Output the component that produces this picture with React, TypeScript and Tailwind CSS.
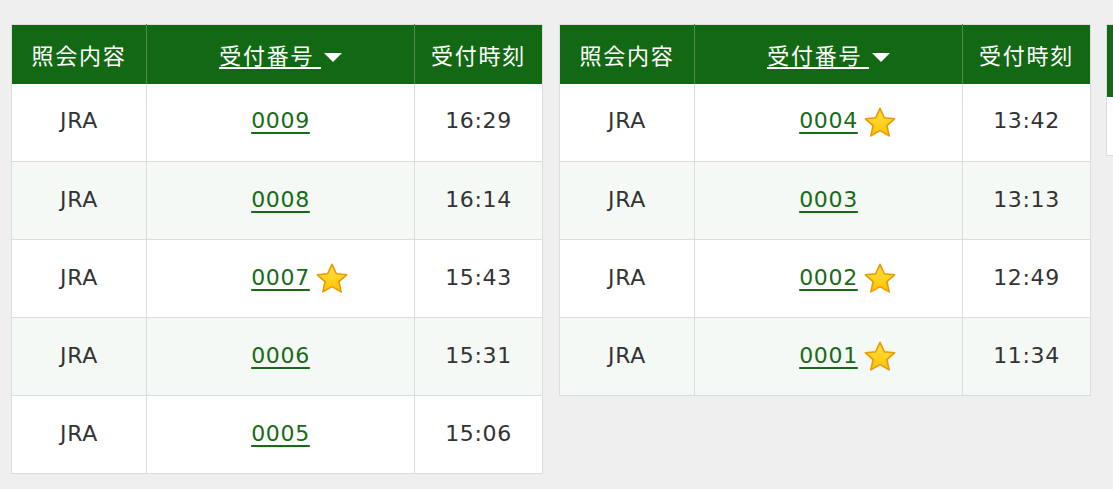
import React from "react";

type Row = { kind: string; no: string; time: string; star?: boolean };

const LEFT: Row[] = [
  { kind: "JRA", no: "0009", time: "16:29" },
  { kind: "JRA", no: "0008", time: "16:14" },
  { kind: "JRA", no: "0007", time: "15:43", star: true },
  { kind: "JRA", no: "0006", time: "15:31" },
  { kind: "JRA", no: "0005", time: "15:06" },
];

const RIGHT: Row[] = [
  { kind: "JRA", no: "0004", time: "13:42", star: true },
  { kind: "JRA", no: "0003", time: "13:13" },
  { kind: "JRA", no: "0002", time: "12:49", star: true },
  { kind: "JRA", no: "0001", time: "11:34", star: true },
];

function Star() {
  return (
    <svg width="36" height="36" viewBox="0 0 24 24" className="absolute left-full top-1/2 ml-[4px] -mt-[16px]">
      <defs>
        <linearGradient id="sg" x1="0" y1="0" x2="0" y2="1">
          <stop offset="0" stopColor="#ffe14a" />
          <stop offset="1" stopColor="#ffc300" />
        </linearGradient>
      </defs>
      <path
        d="M12 2.2l2.9 6.3 6.8.7-5.1 4.6 1.5 6.8L12 17.1l-6.1 3.5 1.5-6.8-5.1-4.6 6.8-.7z"
        fill="url(#sg)"
        stroke="#eb9a00"
        strokeWidth="1.1"
        strokeLinejoin="round"
      />
    </svg>
  );
}

function ResultTable({ rows }: { rows: Row[] }) {
  return (
    <table className="border-collapse border border-[#dcdcdc] bg-white shrink-0">
      <thead>
        <tr className="h-[59px] bg-[#136913] text-white text-[22px] tracking-[0.08em] font-['Noto_Sans_CJK_JP',sans-serif]">
          <th className="w-[135px] font-normal border-r border-[#4c8c4c]">照会内容</th>
          <th className="w-[268px] font-normal border-r border-[#4c8c4c]">
            <span className="underline underline-offset-[3px] decoration-[1.5px]">受付番号&nbsp;</span>
            <span className="inline-block align-middle ml-[3px] w-0 h-0 border-l-[9px] border-r-[9px] border-t-[9px] border-l-transparent border-r-transparent border-t-white" />
          </th>
          <th className="w-[128px] font-normal">受付時刻</th>
        </tr>
      </thead>
      <tbody>
        {rows.map((r, i) => (
          <tr key={r.no} className={`h-[78px] border-b border-[#dcdcdc] text-[22px] text-[#333] tracking-[0.03em] ${i % 2 === 1 ? "bg-[#f5f9f5]" : "bg-white"}`}>
            <td className="text-center pb-[3px] border-r border-[#dcdcdc]">{r.kind}</td>
            <td className="text-center pb-[3px] border-r border-[#dcdcdc]">
              <span className="relative inline-block">
                <a href="#" className="text-[#176b17] underline underline-offset-[4px] decoration-[1.5px]">{r.no}</a>
                {r.star && <Star />}
              </span>
            </td>
            <td className="text-center pb-[3px]">{r.time}</td>
          </tr>
        ))}
      </tbody>
    </table>
  );
}

export default function App() {
  return (
    <div
      className="w-[1113px] h-[489px] overflow-hidden bg-[#efefef] pt-[24px] pl-[11px] flex items-start gap-[16px]"
      style={{ fontFamily: '"DejaVu Sans", "Noto Sans CJK JP", sans-serif' }}
    >
      <ResultTable rows={LEFT} />
      <ResultTable rows={RIGHT} />
      <div className="shrink-0 w-[300px] -ml-[1px] border border-[#dcdcdc] bg-white">
        <div className="h-[72px] bg-[#136913]" />
        <div className="h-[58px]" />
      </div>
    </div>
  );
}
